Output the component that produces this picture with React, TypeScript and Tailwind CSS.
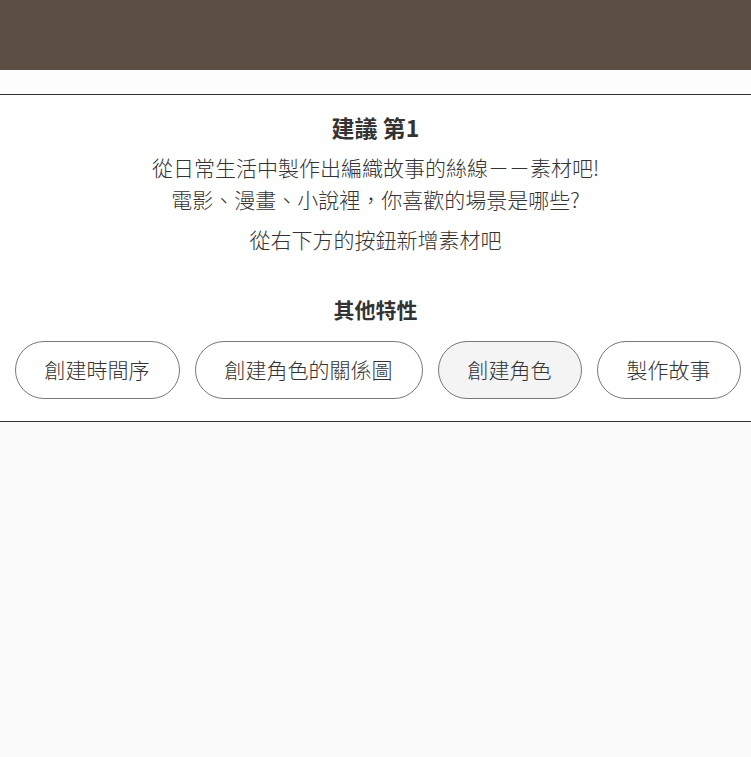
import React from "react";

const chips = [
  { label: "創建時間序", active: false },
  { label: "創建角色的關係圖", active: false },
  { label: "創建角色", active: true },
  { label: "製作故事", active: false },
];

export default function App() {
  return (
    <div
      className="min-h-[757px] bg-[#fafafa] text-[#333]"
      style={{ fontFamily: '"Noto Sans CJK TC", "Noto Sans", sans-serif' }}
    >
      <div className="h-[70px] bg-[#5c4e43]" />
      <div className="h-[24px] bg-[#fdfdfd]" />
      <section className="border-y-[1.5px] border-[#333] bg-white pt-[17px] pb-[22px] flex flex-col items-center">
        <h1 className="text-[23px] font-bold leading-[30px]">建議 第1</h1>
        <p className="mt-[9px] text-[21px] font-light leading-[32px] text-center">
          從日常生活中製作出編織故事的絲線－－素材吧!
          <br />
          電影、漫畫、小說裡，你喜歡的場景是哪些?
        </p>
        <p className="mt-[8px] text-[21px] font-light leading-[32px]">從右下方的按鈕新增素材吧</p>
        <h2 className="mt-[40px] text-[21px] font-bold leading-[28px]">其他特性</h2>
        <div className="mt-[18px] ml-[4px] flex gap-[15px]">
          {chips.map((c) => (
            <button
              key={c.label}
              className={`h-[58px] rounded-full border border-[#777] px-[29px] text-[21px] font-light text-[#333] ${
                c.active ? "bg-[#f4f4f4]" : "bg-white"
              }`}
            >
              {c.label}
            </button>
          ))}
        </div>
      </section>
    </div>
  );
}
